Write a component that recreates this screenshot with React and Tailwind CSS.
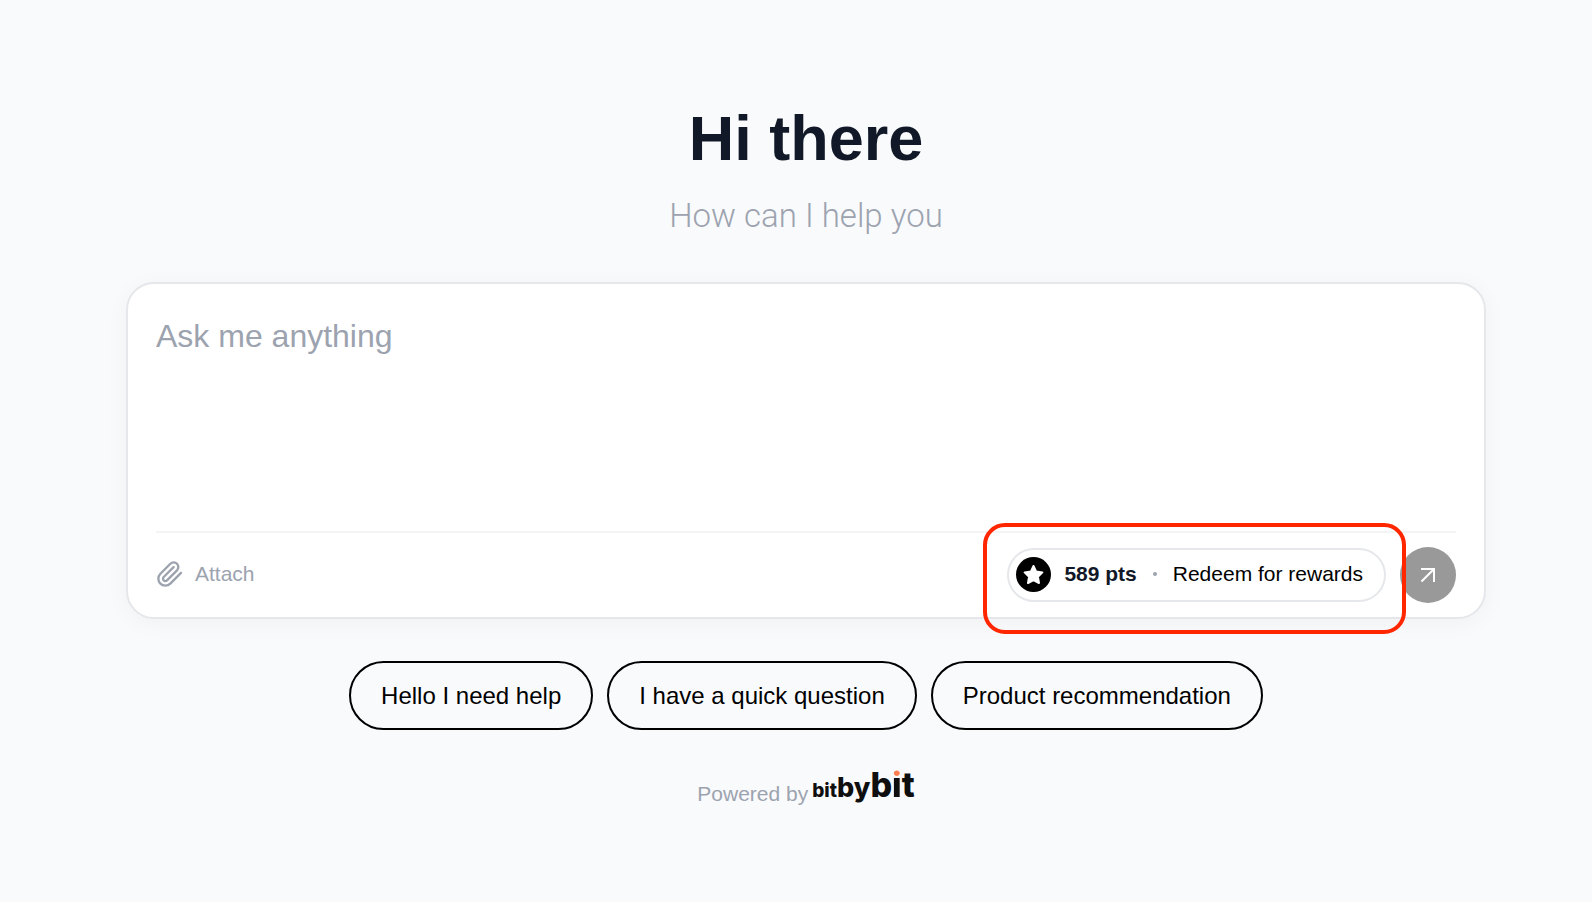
import { useState, useRef } from "react"
import { LuPaperclip } from "react-icons/lu";

const suggestions = ["Hello I need help", "I have a quick question", "Product recommendation"];

function Logo() {
    return (
        <a href="#bitbybit" className="flex items-baseline pb-1 font-[Inter,sans-serif] font-extrabold leading-none text-[#0f0f0f]">
            <span className="text-[19px]">bit</span>
            <span className="text-[27px]">by</span>
            <span className="text-[34px]">
                b<span className="bg-linear-to-b from-[#ff7f50] from-30% to-[#0f0f0f] to-30% bg-clip-text text-transparent">i</span>t
            </span>
        </a>
    )
}

function App() {

    const [userInput, setUserInput] = useState("");
    const addFilesRef = useRef(null);

    const handleSubmit = (e) => {
        e.preventDefault();
        if (userInput.length === 0) return;
        setUserInput("");
    }

    return (
        <main className="flex min-h-screen flex-col items-center bg-[#f9fafc] pt-[104px] pr-[106px] pb-10 pl-[126px] font-['Liberation_Sans',Arial,sans-serif]">
            {/* greeting */}
            <h1 className="text-[63px] leading-[68px] font-bold text-[#111827]">Hi there</h1>
            <p className="mt-6 font-[Roboto,sans-serif] text-[33px] leading-10 font-light text-[#9ca3af]">How can I help you</p>

            {/* input box */}
            <form onSubmit={handleSubmit} className="mt-[46px] flex w-full flex-col rounded-[28px] border-2 border-[#e5e7eb] bg-white px-[28px] pb-[14px] shadow-[0_4px_24px_rgba(0,0,0,0.04)]">
                <textarea
                    aria-label="Message"
                    placeholder="Ask me anything"
                    value={userInput}
                    onChange={(e) => setUserInput(e.target.value)}
                    className="h-[247px] resize-none pt-8 text-[32px] leading-10 text-[#111827] outline-none placeholder:text-[#9ca3af]"
                />
                <div className="flex items-center justify-between border-t-2 border-[#f3f4f6] pt-[14px]">
                    <button type="button" className="flex items-center gap-[11px] pb-[2px] text-[21px] leading-8 text-[#9ca3af]" onClick={() => addFilesRef.current.click()}>
                        <LuPaperclip className="size-7" />
                        Attach
                    </button>
                    <input type="file" aria-label="Attach files" ref={addFilesRef} multiple hidden />

                    <div className="flex items-center gap-[14px]">
                        <div className="relative">
                            <button type="button" className="flex h-[54px] items-center rounded-full border-2 border-[#e5e7eb] bg-white pr-[21px] pb-[2px] pl-[7px] text-[21px] leading-8 text-black">
                                <svg viewBox="0 0 35 35" className="size-[35px]">
                                    <circle cx="17.5" cy="17.5" r="17.5" fill="#000" />
                                    <path d="M17.5 9 L20.2 14.6 L26.4 15.4 L21.9 19.7 L23 26 L17.5 23 L12 26 L13.1 19.7 L8.6 15.4 L14.8 14.6 Z" fill="#fff" stroke="#fff" strokeWidth="2" strokeLinejoin="round" />
                                </svg>
                                <span className="ml-[13px] font-bold text-[#111827]">589 pts</span>
                                <span className="mx-4 size-1 rounded-full bg-[#9ca3af]" />
                                <span>Redeem for rewards</span>
                            </button>
                            {/* highlight frame */}
                            <div className="pointer-events-none absolute -top-[25px] -right-5 -bottom-8 -left-6 rounded-[22px] border-4 border-[#ff2600]" />
                        </div>
                        <button aria-label="Send" className="flex size-14 items-center justify-center rounded-full bg-[#999999]">
                            <svg viewBox="0 0 16 16" className="size-4" fill="none" stroke="#fff" strokeWidth="2">
                                <path d="M1 2 H14 V15 M14 2 L1.5 14.5" />
                            </svg>
                        </button>
                    </div>
                </div>
            </form>

            {/* quick replies */}
            <div className="mt-[42px] flex flex-wrap justify-center gap-[14px]">
                {suggestions.map((text) => (
                    <button key={text} className="h-[69px] rounded-full border-2 border-black px-[30px] text-[24px] text-black" onClick={() => setUserInput(text)}>
                        {text}
                    </button>
                ))}
            </div>

            <div className="mt-[38px] flex items-end gap-1">
                <span className="text-[21px] leading-6 text-[#9ca3af]">Powered by</span>
                <Logo />
            </div>
        </main>
    )
}

export default App
